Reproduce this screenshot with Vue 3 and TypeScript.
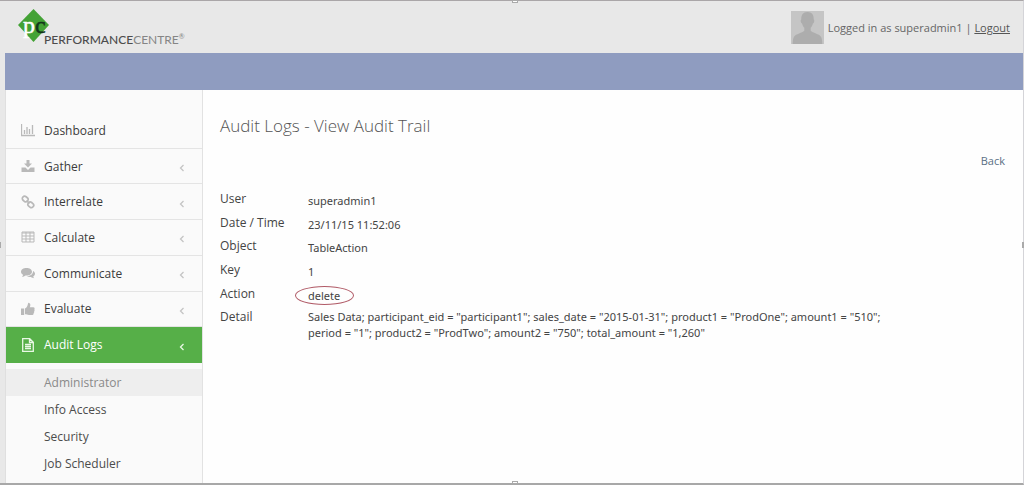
<script setup lang="ts">
interface MenuItem {
  label: string
  icon: string
  expandable: boolean
  active?: boolean
}

interface AuditField {
  label: string
  value: string
  kind?: 'marked' | 'long'
}

const menu: MenuItem[] = [
  { label: 'Dashboard', icon: 'chart', expandable: false },
  { label: 'Gather', icon: 'download', expandable: true },
  { label: 'Interrelate', icon: 'link', expandable: true },
  { label: 'Calculate', icon: 'table', expandable: true },
  { label: 'Communicate', icon: 'comments', expandable: true },
  { label: 'Evaluate', icon: 'thumb', expandable: true },
  { label: 'Audit Logs', icon: 'file', expandable: true, active: true },
]

const submenu: string[] = ['Administrator', 'Info Access', 'Security', 'Job Scheduler']
const current = 'Administrator'

const fields: AuditField[] = [
  { label: 'User', value: 'superadmin1' },
  { label: 'Date / Time', value: '23/11/15 11:52:06' },
  { label: 'Object', value: 'TableAction' },
  { label: 'Key', value: '1' },
  { label: 'Action', value: 'delete', kind: 'marked' },
  {
    label: 'Detail',
    value:
      'Sales Data; participant_eid = "participant1"; sales_date = "2015-01-31"; product1 = "ProdOne"; amount1 = "510"; period = "1"; product2 = "ProdTwo"; amount2 = "750"; total_amount = "1,260"',
    kind: 'long',
  },
]
</script>

<template>
  <div class="page">
    <header class="top">
      <a class="brand" href="#" aria-label="Performance Centre">
        <svg class="mark" viewBox="0 0 32 34" aria-hidden="true">
          <path d="M15.500 0 31 16 15.500 33 0 16z" fill="#43a235" />
          <text x="5" y="24" class="mark-p">p</text>
          <text x="17" y="24" class="mark-c">c</text>
        </svg>
        <span class="wordmark"><b>PERFORMANCE</b>CENTRE<sup>®</sup></span>
      </a>
      <div class="session">
        <svg class="avatar" viewBox="0 0 33 33" aria-hidden="true">
          <rect width="33" height="33" fill="#c5c5c5" />
          <path d="M16.500 1c4.500 0 6.500 3 6.200 7.500 1 .3.700 3.500-.8 4-.4 2-1.200 3.200-2.200 4.200v3c2 2.300 8.500 3 10.300 6 1 1.800 1.300 4.500 1.300 7.300H1.700c0-2.800.3-5.500 1.300-7.300 1.800-3 8.300-3.700 10.300-6v-3c-1-1-1.800-2.200-2.200-4.200-1.500-.5-1.800-3.700-.8-4C10 4 12 1 16.500 1z" fill="#adadad" />
        </svg>
        <span>Logged in as superadmin1 | <a href="#">Logout</a></span>
      </div>
    </header>
    <div class="band"></div>
    <div class="body">
      <nav class="side">
        <ul class="menu">
          <li v-for="item in menu" :key="item.label">
            <a href="#" :class="{ active: item.active }">
              <svg class="icon" viewBox="0 0 14 14" aria-hidden="true">
                <path v-if="item.icon === 'chart'" d="M.5 1v11.500H14M3.500 11V7M6 11V4M8.500 11V6M11.500 11V2" fill="none" stroke="currentColor" stroke-width="1.300" />
                <path v-else-if="item.icon === 'download'" d="M5.500 1h3v3.500H11L7 8.500 3 4.500h2.500zM.5 8.500h4L7 11l2.500-2.500h4V13H.5z" fill="currentColor" />
                <g v-else-if="item.icon === 'link'" fill="none" stroke="currentColor" stroke-width="1.700">
                  <rect x="1.200" y="1.700" width="6" height="4.600" rx="2.200" transform="rotate(40 4.200 4)" />
                  <rect x="6.800" y="7.500" width="6" height="4.600" rx="2.200" transform="rotate(40 9.800 9.800)" />
                  <path d="M5.500 5.500l3 3" />
                </g>
                <path v-else-if="item.icon === 'table'" d="M1 2h12v10H1zM1 3h12M1 6h12M1 9h12M5 2v10M9 2v10" fill="none" stroke="currentColor" />
                <path v-else-if="item.icon === 'comments'" d="M5.500 2C8.500 2 11 3.500 11 5.700S8.500 9.500 5.500 9.500l-1-.1C3.500 10.200 2.300 10.700 1 10.700c.7-.6 1-1.200 1.100-2C.8 8 0 6.900 0 5.700 0 3.500 2.500 2 5.500 2zM12 5c1.300.7 2 1.600 2 2.700 0 1.100-.7 2-1.800 2.700.1.700.5 1.200 1.100 1.800-1.400 0-2.500-.5-3.400-1.200-1.600.2-3.300-.1-4.300-.7C9.500 10.200 12.300 8 12 5z" fill="currentColor" />
                <path v-else-if="item.icon === 'thumb'" d="M0 6.500h3.200V13H0zM4 6.500C5.800 5.500 6.600 3.900 6.900 2c.2-1 .6-1.300 1.300-1.100C9.800 1.400 9.500 3.500 8.800 5.300h3.400c1.500 0 1.800 1.200 1.100 2 .6.700.4 1.500-.2 1.900.4.700.1 1.400-.5 1.700.3 1.400-.5 2.100-1.800 2.100H8c-1.500 0-2.700-.7-4-.7z" fill="currentColor" />
                <path v-else d="M1.700.7h7l3.600 3.600v9H1.700zM8.500.7v3.800h3.800M4 6.500h6M4 8.500h6M4 10.500h6" fill="none" stroke="currentColor" stroke-width="1.300" />
              </svg>
              <span class="label">{{ item.label }}</span>
              <svg v-if="item.expandable" class="chevron" viewBox="0 0 6 8" aria-hidden="true">
                <path d="M4.500 1l-3 3 3 3" fill="none" stroke="currentColor" stroke-width="1.300" />
              </svg>
            </a>
          </li>
        </ul>
        <ul class="submenu">
          <li v-for="name in submenu" :key="name">
            <a href="#" :class="{ current: name === current }">{{ name }}</a>
          </li>
        </ul>
      </nav>
      <main class="content">
        <h1>Audit Logs - View Audit Trail</h1>
        <a class="back" href="#">Back</a>
        <dl class="fields">
          <div v-for="field in fields" :key="field.label" class="field">
            <dt>{{ field.label }}</dt>
            <dd :class="field.kind">
              <span>{{ field.value }}</span>
            </dd>
          </div>
        </dl>
      </main>
    </div>
    <i class="handle handle-top"></i>
    <i class="handle handle-bottom"></i>
    <i class="handle handle-left"></i>
    <i class="handle handle-right"></i>
  </div>
</template>

<style>
body {
  margin: 0;
}
</style>

<style scoped>
.page {
  position: relative;
  box-sizing: border-box;
  min-height: 100vh;
  display: flex;
  flex-direction: column;
  padding-left: 5px;
  border-top: 1px solid #aaa6a8;
  border-bottom: 2px solid #a8a8a8;
  border-right: 1px solid #d4d4d8;
  background: #e8e8e8;
  color: #444;
  font-family: "Open Sans", "Noto Sans", sans-serif;
  font-size: 12px;
}
ul,
dl,
dd {
  margin: 0;
  padding: 0;
  list-style: none;
}
.top {
  height: 52px;
  display: flex;
  justify-content: space-between;
}
.brand {
  display: flex;
  align-items: flex-start;
  padding: 8px 0 0 13px;
  color: #5c5c5c;
  text-decoration: none;
}
.mark {
  width: 32px;
  height: 34px;
}
.mark-p,
.mark-c {
  font-family: "Liberation Serif", serif;
  font-size: 24px;
  fill: #fff;
  stroke: #fff;
  stroke-width: 0.5;
}
.mark-c {
  fill: #12351a;
  stroke: #12351a;
}
.wordmark {
  margin: 21px 0 0 -6px;
  font-family: "Lato", sans-serif;
  font-size: 12px;
  line-height: 20px;
  color: #858585;
}
.wordmark b {
  font-weight: 500;
  color: #4c4c4c;
}
.wordmark sup {
  font-size: 7px;
  line-height: 0;
}
.session {
  display: flex;
  align-items: center;
  gap: 4px;
  padding-right: 13px;
  font-size: 11px;
  color: #666;
}
.session a {
  color: #555;
}
.avatar {
  width: 33px;
  height: 33px;
}
.band {
  height: 37px;
  background: #8f9cc0;
}
.body {
  flex: 1;
  display: flex;
  background: #fefefe;
}
.side {
  box-sizing: border-box;
  width: 198px;
  flex: none;
  padding-top: 23px;
  border-left: 1px solid #dfdfdf;
  border-right: 1px solid #e2e2e2;
  background: #fafafa;
}
.menu {
  height: 250px;
  display: grid;
  grid-auto-rows: 1fr;
}
.menu li {
  display: grid;
}
.menu a {
  display: flex;
  align-items: center;
  padding: 0 17px 0 15px;
  border-bottom: 1px solid #e4e4e4;
  color: #3c3c3c;
  font-size: 12px;
  text-decoration: none;
}
.menu a.active {
  border-color: #56af48;
  background: #56af48;
  color: #fff;
}
.icon {
  width: 14px;
  height: 14px;
  margin-right: 9px;
  color: #b9b9b9;
}
.label {
  flex: 1;
}
.chevron {
  width: 6px;
  height: 8px;
  margin-top: 4px;
  color: #c4c4c4;
}
.active .icon,
.active .chevron {
  color: #e9f8e5;
}
.submenu {
  padding-top: 6px;
}
.submenu a {
  display: block;
  padding-left: 38px;
  color: #4c4c4c;
  font-size: 12px;
  line-height: 27px;
  text-decoration: none;
}
.submenu a.current {
  background: #eee;
  color: #8a8a8a;
}
.content {
  flex: 1;
  min-width: 0;
  padding: 24px 18px 0 17px;
}
h1 {
  margin: 0;
  color: #555;
  font-size: 17px;
  font-weight: 300;
  line-height: 24px;
}
.back {
  display: block;
  margin-top: 14px;
  color: #5b6f84;
  font-size: 11px;
  line-height: 18px;
  text-align: right;
  text-decoration: none;
}
.fields {
  height: 142px;
  margin-top: 17px;
  display: grid;
  grid-template-rows: repeat(6, minmax(0, 1fr));
}
.field {
  display: grid;
  grid-template-columns: 88px minmax(0, 600px);
}
dt {
  font-size: 12px;
  line-height: 24px;
}
dd {
  padding-top: 4px;
  font-family: "Noto Sans", "Open Sans", sans-serif;
  font-size: 11px;
  line-height: 20px;
}
dd.long {
  line-height: 16px;
}
.marked {
  position: relative;
}
.marked::before {
  content: "";
  position: absolute;
  box-sizing: border-box;
  left: -13px;
  top: 4px;
  width: 59px;
  height: 19px;
  border: 1px solid #b05a66;
  border-radius: 50%;
}
.handle {
  position: absolute;
  box-sizing: border-box;
  width: 6px;
  height: 3px;
  border: 1px solid #aaa;
  background: #fff;
}
.handle-top {
  top: -1px;
  left: 50%;
}
.handle-bottom {
  bottom: -1px;
  left: 50%;
}
.handle-left,
.handle-right {
  top: 50%;
  width: 2px;
  height: 6px;
}
.handle-left {
  left: -1px;
}
.handle-right {
  right: -1px;
}
</style>
